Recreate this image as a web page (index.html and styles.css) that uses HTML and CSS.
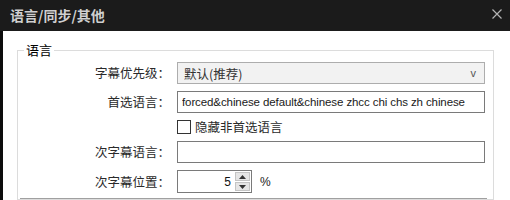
FILE: index.html
```html
<!DOCTYPE html>
<html lang="zh-CN">
<head>
    <meta charset="UTF-8">
    <title>语言/同步/其他</title>
    <link rel="stylesheet" href="styles.css">
</head>
<body>
    <div class="window">
        <div class="titlebar">
            <span class="title">语言/同步/其他</span>
            <span class="close">
                <svg width="10" height="10" viewBox="0 0 10 10">
                    <path d="M0.5 0.5 L9.5 9.5 M9.5 0.5 L0.5 9.5" stroke="#b4b4b4" stroke-width="1.2" fill="none"/>
                </svg>
            </span>
        </div>

        <div class="content">
            <fieldset class="group">
                <legend>语言</legend>
                <div class="form">
                    <span class="label">字幕优先级：</span>
                    <div class="combo">
                        <span>默认(推荐)</span>
                        <span class="arrow">v</span>
                    </div>

                    <span class="label">首选语言：</span>
                    <input class="text" type="text" value="forced&amp;chinese default&amp;chinese zhcc chi chs zh chinese">

                    <span></span>
                    <label class="check"><span class="box"></span>隐藏非首选语言</label>

                    <span class="label">次字幕语言：</span>
                    <input class="text" type="text" value="">

                    <span class="label">次字幕位置：</span>
                    <div class="spin-row">
                        <div class="spin">
                            <span class="spin-value">5</span>
                            <div class="spin-buttons">
                                <span class="spin-btn">
                                    <svg width="7" height="4" viewBox="0 0 7 4"><path d="M3.5 0 L7 4 L0 4 Z" fill="#333"/></svg>
                                </span>
                                <span class="spin-btn">
                                    <svg width="7" height="4" viewBox="0 0 7 4"><path d="M0 0 L7 0 L3.5 4 Z" fill="#333"/></svg>
                                </span>
                            </div>
                        </div>
                        <span class="unit">%</span>
                    </div>
                </div>
                <div class="rule"></div>
            </fieldset>
        </div>
    </div>
</body>
</html>
```

FILE: styles.css
```css
body {
    margin: 0;
    width: 510px;
    height: 200px;
    overflow: hidden;
    background-color: #ffffff;
    font-family: "Noto Sans CJK SC", "Liberation Sans", sans-serif;
}
.window {
    height: 200px;
    background-color: #ffffff;
}
.titlebar {
    height: 31px;
    background-color: #1b1b1b;
    display: flex;
    align-items: center;
    justify-content: space-between;
    padding: 0 8px 0 10px;
}
.title {
    color: #cfcfcf;
    font-size: 14px;
    font-weight: bold;
    line-height: 16px;
    margin-top: -2px;
}
.close {
    display: flex;
    margin-top: -3px;
}
.content {
    border-left: 3px solid #0c0c0c;
    height: 169px;
    padding-top: 11px;
    box-sizing: border-box;
}
.group {
    margin: 0 16px 0 14px;
    padding: 4px 0 0 0;
    border: 1px solid #dcdcdc;
    min-width: 0;
}
.group legend {
    margin-left: 6px;
    padding: 0 2px;
    font-size: 13px;
    line-height: 16px;
    color: #000000;
}
.form {
    display: grid;
    grid-template-columns: 152px 308px;
    grid-template-rows: 22px 22px 14px 22px 23px;
    column-gap: 7px;
    row-gap: 7px;
    align-items: center;
}
.label {
    text-align: right;
    font-size: 12.5px;
    color: #2a2a2a;
    line-height: 16px;
}
.combo {
    height: 22px;
    box-sizing: border-box;
    border: 1px solid #adadad;
    background-color: #f2f2f2;
    display: flex;
    align-items: center;
    justify-content: space-between;
    padding: 0 8px 0 6px;
    font-size: 12.5px;
    color: #333333;
}
.arrow {
    font-family: "Liberation Sans", sans-serif;
    font-size: 11px;
    color: #555555;
}
.text {
    height: 22px;
    width: 308px;
    box-sizing: border-box;
    margin: 0;
    border: 1px solid #7a7a7a;
    padding: 0 3px 0 4px;
    font-family: "Liberation Sans", sans-serif;
    font-size: 11.5px;
    letter-spacing: -0.1px;
    color: #1a1a1a;
    background-color: #ffffff;
    outline: none;
}
.check {
    display: flex;
    align-items: center;
    font-size: 12.5px;
    color: #2a2a2a;
    line-height: 14px;
}
.box {
    width: 12px;
    height: 12px;
    border: 1px solid #333333;
    background-color: #ffffff;
    margin-right: 4px;
}
.spin-row {
    display: flex;
    align-items: center;
}
.spin {
    width: 75px;
    height: 23px;
    box-sizing: border-box;
    border: 1px solid #7a7a7a;
    display: flex;
    align-items: center;
    justify-content: flex-end;
    padding-right: 1px;
}
.spin-value {
    font-family: "Liberation Sans", sans-serif;
    font-size: 12px;
    color: #111111;
    margin-right: 4px;
}
.spin-buttons {
    display: flex;
    flex-direction: column;
    gap: 1px;
}
.spin-btn {
    width: 15px;
    height: 9px;
    background-color: #e5e5e5;
    border: 1px solid #c4c4c4;
    box-sizing: border-box;
    display: flex;
    align-items: center;
    justify-content: center;
}
.unit {
    font-family: "Liberation Sans", sans-serif;
    font-size: 12px;
    color: #222222;
    margin-left: 8px;
}
.rule {
    margin: 5px 6px 0 2px;
    border-top: 1px solid #a0a0a0;
}
```
